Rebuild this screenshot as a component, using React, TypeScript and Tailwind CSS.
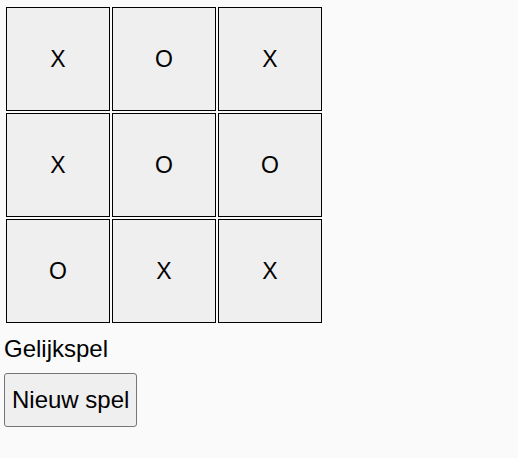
import { useState } from "react";

type Cell = "X" | "O" | null;

const start: Cell[] = ["X", "O", "X", "X", "O", "O", "O", "X", "X"];

export default function App() {
  const [board, setBoard] = useState<Cell[]>(start);

  return (
    <div
      className="min-h-screen bg-[#fafafa] px-1 pt-[5px] text-black"
      style={{ fontFamily: '"Liberation Sans", Arial, sans-serif' }}
    >
      <div className="inline-grid grid-cols-[repeat(3,104px)] gap-[2px] p-[2px]">
        {board.map((c, i) => (
          <button
            key={i}
            className="flex h-[104px] w-[104px] items-center justify-center border border-black bg-[#efefef] text-[23px]"
          >
            {c}
          </button>
        ))}
      </div>
      <p className="mt-[10px] text-[24px] leading-[28px]">Gelijkspel</p>
      <button
        onClick={() => setBoard(Array(9).fill(null))}
        className="mt-[10px] rounded-[3px] border border-[#767676] bg-[#efefef] px-[7px] py-3 text-[24px] leading-[28px]"
      >
        Nieuw spel
      </button>
    </div>
  );
}
